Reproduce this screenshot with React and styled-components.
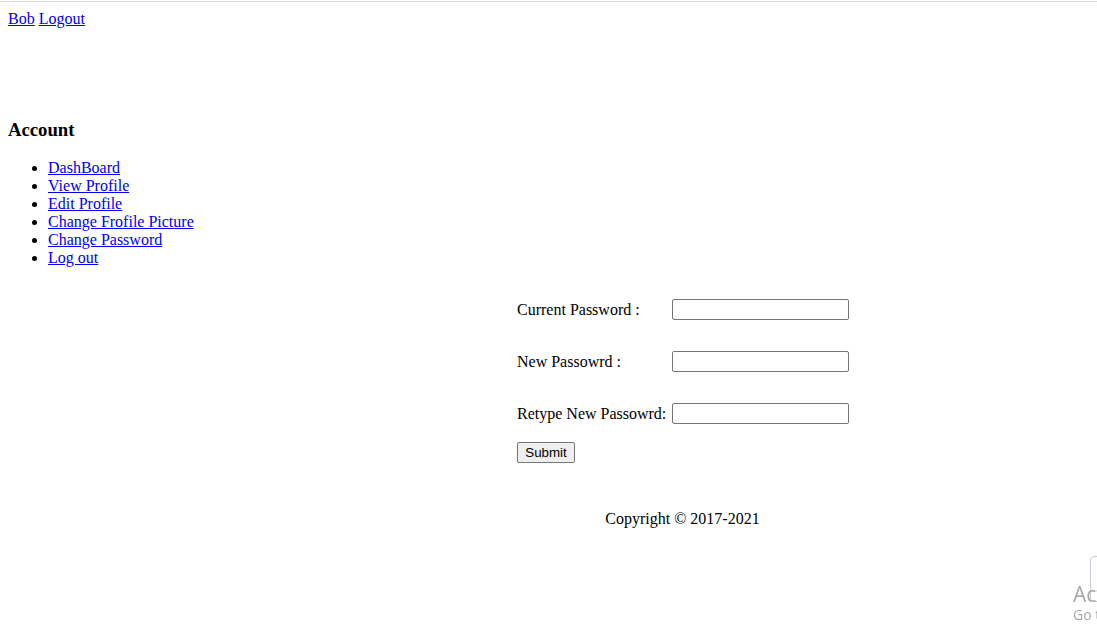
import React from "react";
import styled, { createGlobalStyle } from "styled-components";

const Global = createGlobalStyle`
  html, body { overflow: hidden; }
  body {
    margin: 8px;
    font-family: "Liberation Serif", "Times New Roman", serif;
    font-size: 16px;
    color: #000;
    background: #fff;
  }
  a { color: #0000ee; }
`;

const TopRule = styled.div`
  position: fixed;
  top: 1px;
  left: 0;
  right: 0;
  height: 1px;
  background: #d6d6d6;
`;

const UserBar = styled.div`
  line-height: 18px;
  padding-top: 2px;
`;

const Sidebar = styled.div`
  margin-top: 91px;
`;

const Heading = styled.h3`
  font-size: 18.72px;
  font-weight: bold;
  margin: 0 0 18px 0;
`;

const Menu = styled.ul`
  margin: 0;
  padding-left: 40px;
  line-height: 18px;
`;

const Content = styled.div`
  display: flex;
  flex-direction: column;
  align-items: flex-start;
  padding-left: 509px;
  margin-top: 32px;
`;

const FormGrid = styled.form`
  display: grid;
  grid-template-columns: 155px 177px;
  row-gap: 31px;
  align-items: center;
`;

const Label = styled.label`
  line-height: 18px;
`;

const Input = styled.input`
  box-sizing: border-box;
  width: 177px;
  height: 21px;
  border: 1px solid #767676;
  border-radius: 2px;
  padding: 1px 2px;
  font-family: Arial, "Liberation Sans", sans-serif;
  font-size: 13.33px;
`;

const SubmitButton = styled.button`
  margin-top: 18px;
  box-sizing: border-box;
  width: 58px;
  height: 21px;
  padding: 0;
  background: #efefef;
  border: 1px solid #767676;
  border-radius: 2px;
  font-family: Arial, "Liberation Sans", sans-serif;
  font-size: 13.33px;
  color: #000;
`;

const Footer = styled.p`
  margin: 47px 0 0 0;
  padding-left: 597px;
  width: 155px;
  text-align: center;
  line-height: 18px;
`;

const Watermark = styled.div`
  position: fixed;
  left: 1073px;
  top: 582px;
  width: 24px;
  overflow: hidden;
  font-family: "Open Sans", "Noto Sans", sans-serif;
  color: #a6a6a6;
  white-space: nowrap;
`;

const WmTitle = styled.div`
  font-size: 21px;
  line-height: 24px;
`;

const WmSub = styled.div`
  font-size: 14px;
  line-height: 18px;
`;

const WmBox = styled.div`
  position: fixed;
  left: 1090px;
  top: 556px;
  width: 20px;
  height: 44px;
  border: 1px solid #c8ccd8;
  border-radius: 4px;
`;

export default function App() {
  return (
    <>
      <Global />
      <TopRule />
      <UserBar>
        <a href="#">Bob</a> <a href="#">Logout</a>
      </UserBar>
      <Sidebar>
        <Heading>Account</Heading>
        <Menu>
          <li><a href="#">DashBoard</a></li>
          <li><a href="#">View Profile</a></li>
          <li><a href="#">Edit Profile</a></li>
          <li><a href="#">Change Frofile Picture</a></li>
          <li><a href="#">Change Password</a></li>
          <li><a href="#">Log out</a></li>
        </Menu>
      </Sidebar>
      <Content>
        <FormGrid onSubmit={(e) => e.preventDefault()}>
          <Label>Current Password :</Label>
          <Input type="password" />
          <Label>New Passowrd :</Label>
          <Input type="password" />
          <Label>Retype New Passowrd:</Label>
          <Input type="password" />
        </FormGrid>
        <SubmitButton type="button">Submit</SubmitButton>
      </Content>
      <Footer>Copyright © 2017-2021</Footer>
      <WmBox />
      <Watermark>
        <WmTitle>Activate Windows</WmTitle>
        <WmSub>Go to Settings to activate Windows.</WmSub>
      </Watermark>
    </>
  );
}
